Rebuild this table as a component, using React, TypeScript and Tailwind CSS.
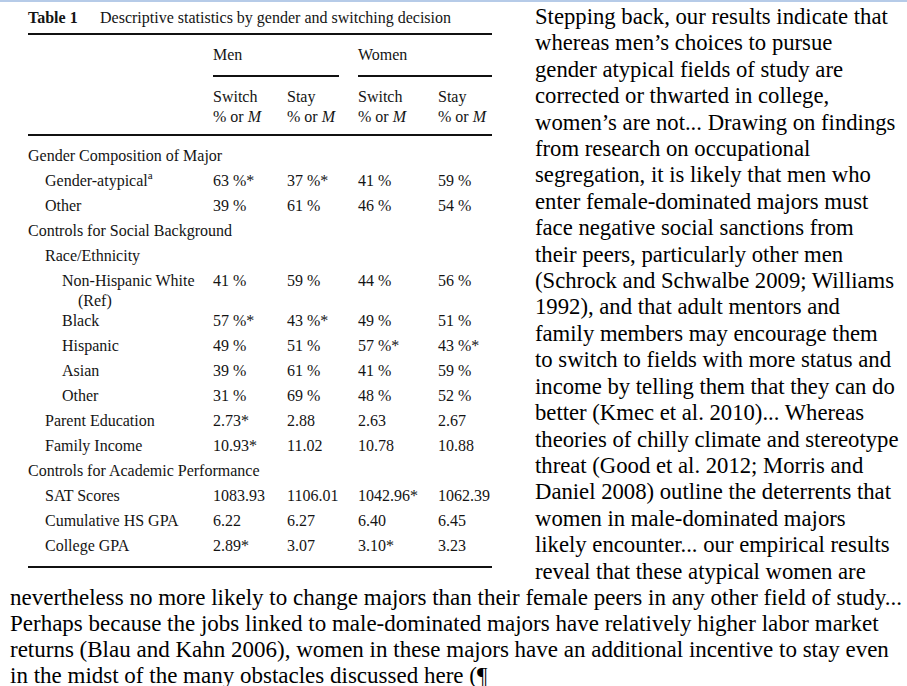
type Row = {
  label: React.ReactNode;
  level: 0 | 1 | 2;
  vals?: string[];
  extra?: string;
};

const rows: Row[] = [
  { label: 'Gender Composition of Major', level: 0 },
  { label: <>Gender-atypical<sup className="text-[11px] -top-[7px]">a</sup></>, level: 1, vals: ['63 %*', '37 %*', '41 %', '59 %'] },
  { label: 'Other', level: 1, vals: ['39 %', '61 %', '46 %', '54 %'] },
  { label: 'Controls for Social Background', level: 0 },
  { label: 'Race/Ethnicity', level: 1 },
  { label: 'Non-Hispanic White', level: 2, vals: ['41 %', '59 %', '44 %', '56 %'], extra: '(Ref)' },
  { label: 'Black', level: 2, vals: ['57 %*', '43 %*', '49 %', '51 %'] },
  { label: 'Hispanic', level: 2, vals: ['49 %', '51 %', '57 %*', '43 %*'] },
  { label: 'Asian', level: 2, vals: ['39 %', '61 %', '41 %', '59 %'] },
  { label: 'Other', level: 2, vals: ['31 %', '69 %', '48 %', '52 %'] },
  { label: 'Parent Education', level: 1, vals: ['2.73*', '2.88', '2.63', '2.67'] },
  { label: 'Family Income', level: 1, vals: ['10.93*', '11.02', '10.78', '10.88'] },
  { label: 'Controls for Academic Performance', level: 0 },
  { label: 'SAT Scores', level: 1, vals: ['1083.93', '1106.01', '1042.96*', '1062.39'] },
  { label: 'Cumulative HS GPA', level: 1, vals: ['6.22', '6.27', '6.40', '6.45'] },
  { label: 'College GPA', level: 1, vals: ['2.89*', '3.07', '3.10*', '3.23'] },
];

const indent = ['pl-0', 'pl-[17px]', 'pl-[34px]'];

const rightLines = [
  'Stepping back, our results indicate that',
  'whereas men\u2019s choices to pursue',
  'gender atypical fields of study are',
  'corrected or thwarted in college,',
  'women\u2019s are not... Drawing on findings',
  'from research on occupational',
  'segregation, it is likely that men who',
  'enter female-dominated majors must',
  'face negative social sanctions from',
  'their peers, particularly other men',
  '(Schrock and Schwalbe 2009; Williams',
  '1992), and that adult mentors and',
  'family members may encourage them',
  'to switch to fields with more status and',
  'income by telling them that they can do',
  'better (Kmec et al. 2010)... Whereas',
  'theories of chilly climate and stereotype',
  'threat (Good et al. 2012; Morris and',
  'Daniel 2008) outline the deterrents that',
  'women in male-dominated majors',
  'likely encounter... our empirical results',
  'reveal that these atypical women are',
];

const bottomLines = [
  'nevertheless no more likely to change majors than their female peers in any other field of study...',
  'Perhaps because the jobs linked to male-dominated majors have relatively higher labor market',
  'returns (Blau and Kahn 2006), women in these majors have an additional incentive to stay even',
  'in the midst of the many obstacles discussed here (\u00b6',
];

function SubHead({ label }: { label: string }) {
  return (
    <div className="leading-[20px]">
      <div>{label}</div>
      <div>% or <i>M</i></div>
    </div>
  );
}

function StatsTable() {
  return (
    <div className="w-[525px] shrink-0 pl-[28px] text-[16px] text-[#141414]">
      <div className="w-[464px]">
        <div className="h-[31px] flex items-center">
          <span className="font-bold w-[72px]">Table 1</span>
          <span>Descriptive statistics by gender and switching decision</span>
        </div>
        <div className="h-[2px] bg-[#111]" />
        <div className="grid grid-cols-[185px_145px_134px]">
          <div />
          <div className="h-[40px] flex items-center">Men</div>
          <div className="h-[40px] flex items-center">Women</div>
          <div />
          <div className="h-[2px] bg-[#111] mr-[19px]" />
          <div className="h-[2px] bg-[#111]" />
        </div>
        <div className="grid grid-cols-[185px_74px_71px_80px_1fr] pt-[10px] pb-[7px]">
          <div />
          <SubHead label="Switch" />
          <SubHead label="Stay" />
          <SubHead label="Switch" />
          <SubHead label="Stay" />
        </div>
        <div className="h-[2px] bg-[#111]" />
        <div className="pt-[7px] pb-[8px]">
          {rows.map((r, i) => (
            <div key={i}>
              <div className="grid grid-cols-[185px_74px_71px_80px_1fr] h-[25px] items-center whitespace-nowrap">
                <div className={indent[r.level]}>{r.label}</div>
                {r.vals?.map((v, j) => (
                  <div key={j}>{v}</div>
                ))}
              </div>
              {r.extra && (
                <div className="h-[15px] flex items-center pl-[50px]">{r.extra}</div>
              )}
            </div>
          ))}
        </div>
        <div className="h-[2px] bg-[#111]" />
      </div>
    </div>
  );
}

export default function App() {
  return (
    <div className="w-[907px] h-[686px] bg-white overflow-hidden text-black font-['Liberation_Serif','Times_New_Roman',serif]">
      <div className="h-[2px] bg-[#b6cbe8]" />
      <div className="flex">
        <StatsTable />
        <div className="pl-[10px] pt-[2px] text-[22.7px] leading-[26.4px] whitespace-nowrap">
          {rightLines.map((l, i) => (
            <div key={i}>{l}</div>
          ))}
        </div>
      </div>
      <div className="pl-[10px] text-[23px] leading-[26px] whitespace-nowrap">
        {bottomLines.map((l, i) => (
          <div key={i}>{l}</div>
        ))}
      </div>
    </div>
  );
}
